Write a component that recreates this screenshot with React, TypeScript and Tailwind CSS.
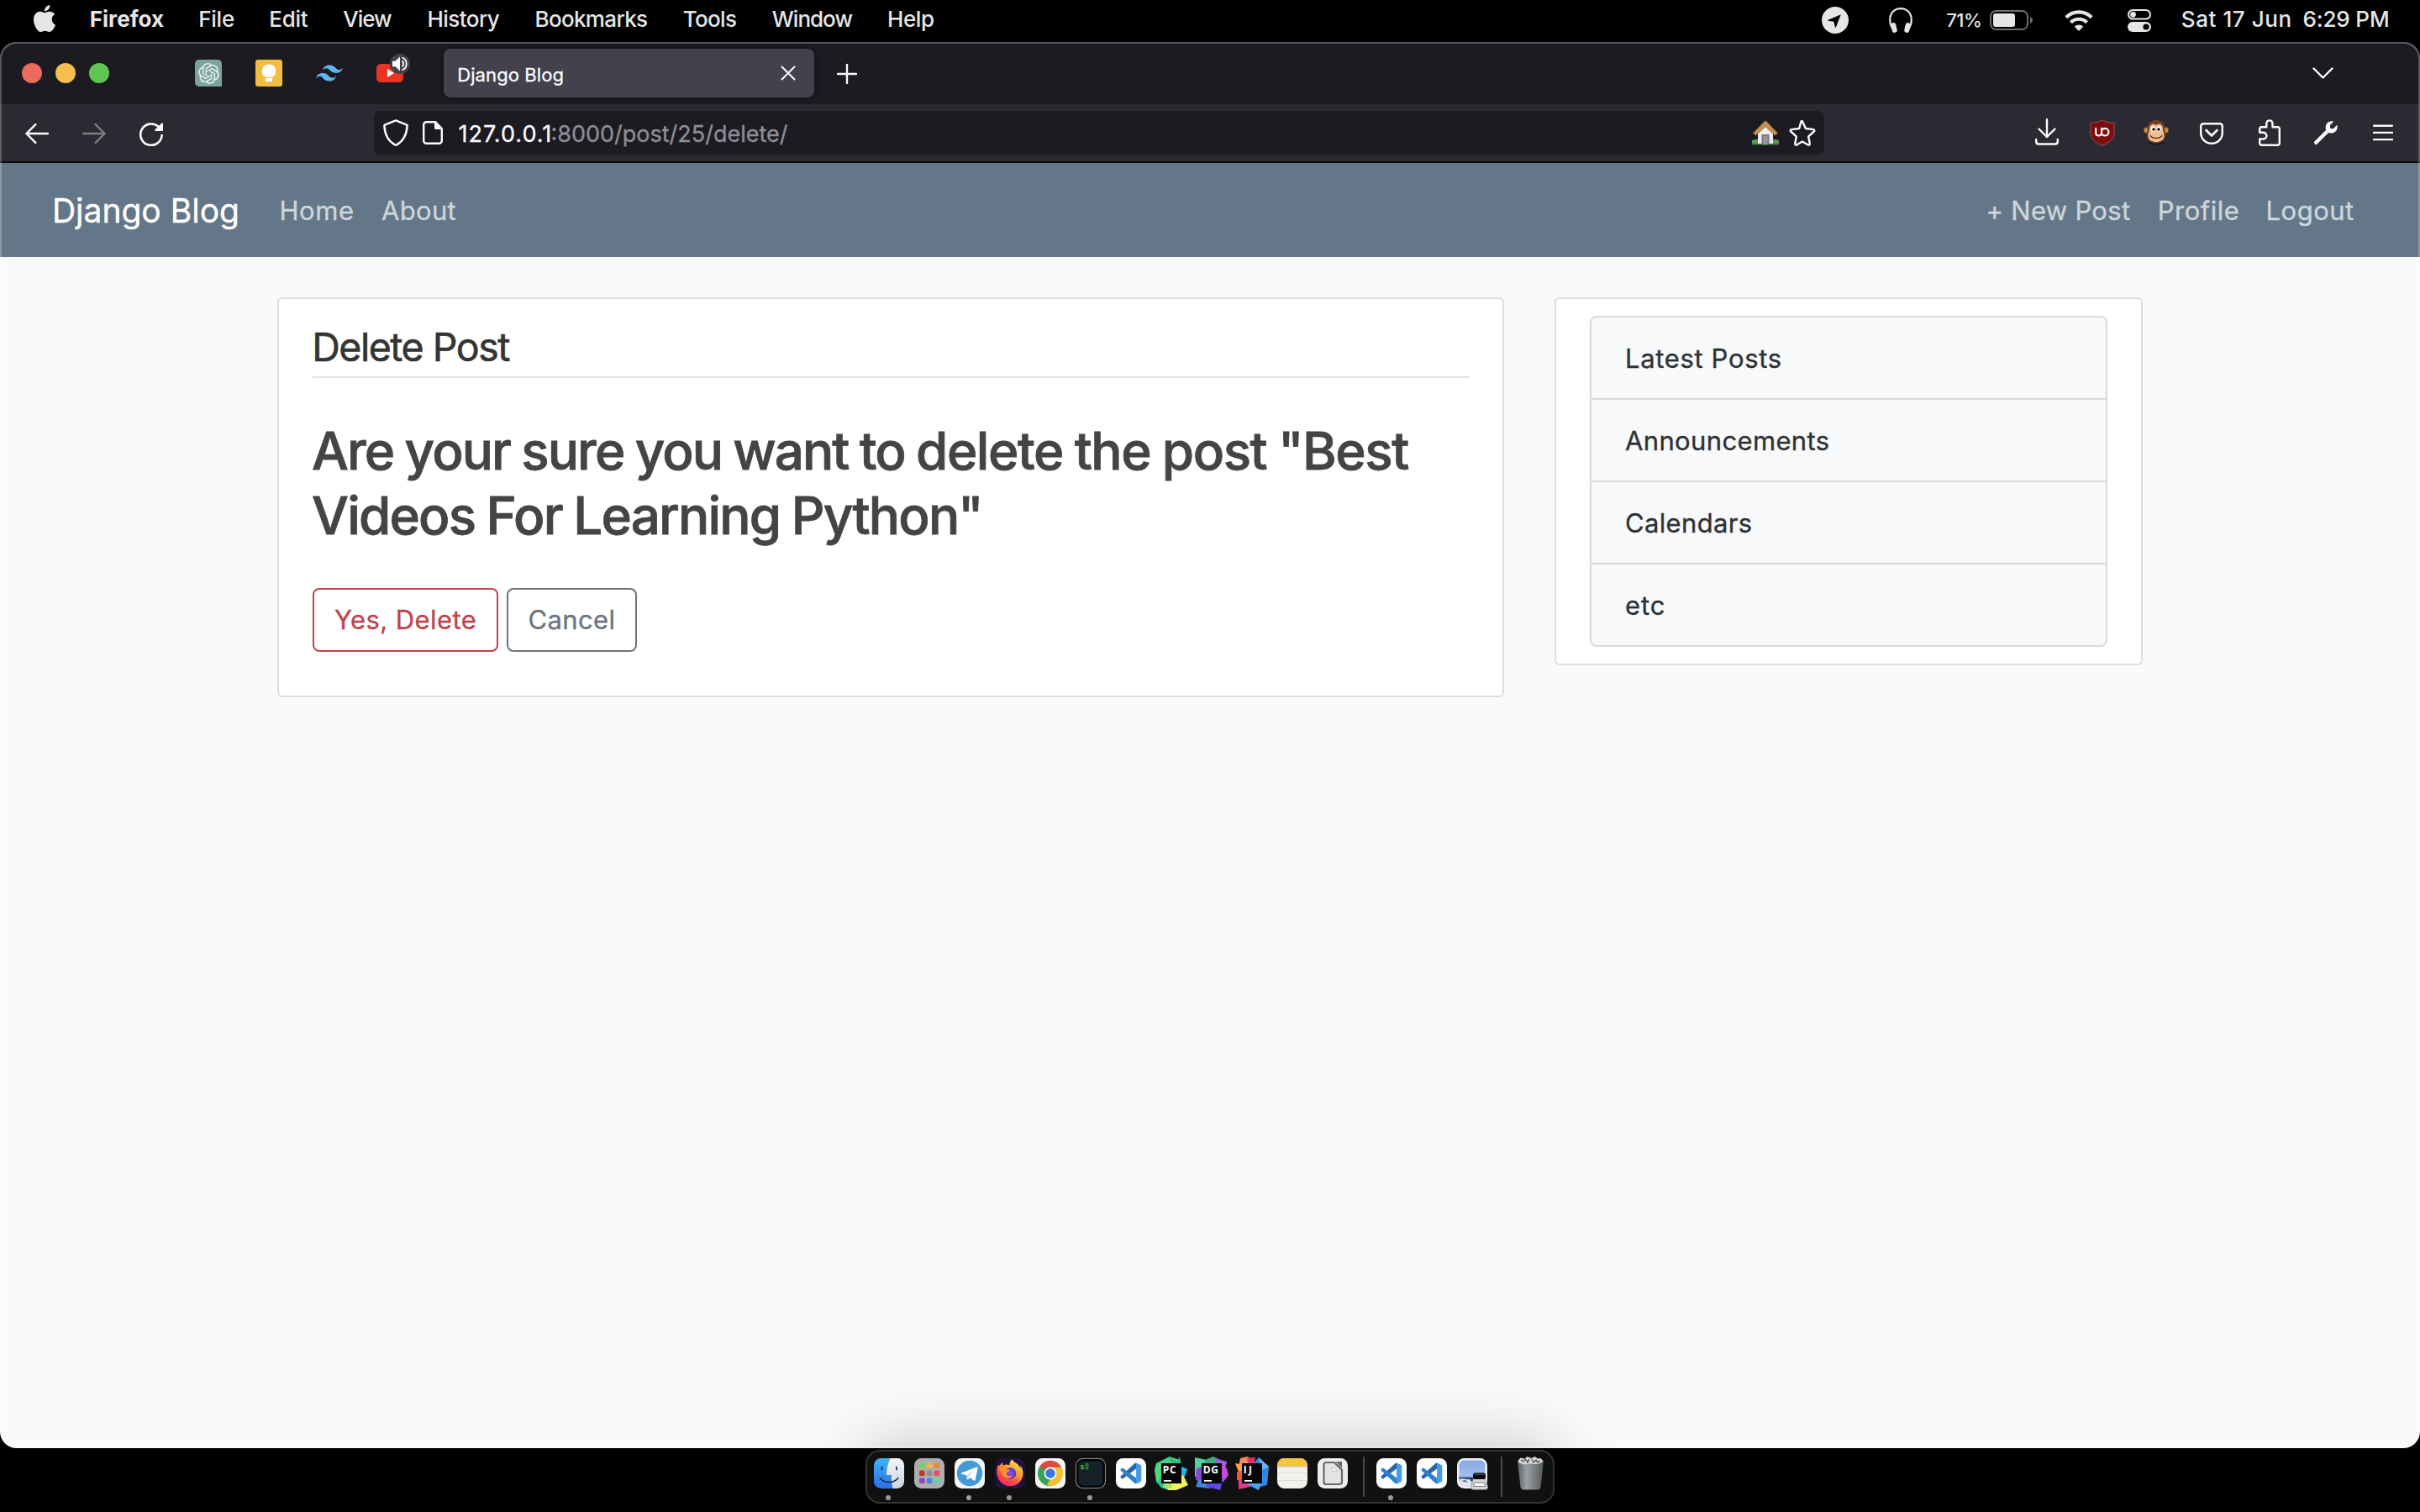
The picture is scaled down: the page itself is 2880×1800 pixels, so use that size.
import React from 'react';
import type { ReactNode } from 'react';
import { SiApple, SiOpenai, SiTailwindcss } from 'react-icons/si';

type Item = { label: string; cls: string };

const menus: Item[] = [
  { label: 'Firefox', cls: 'w-[129.5px] font-bold tracking-[0.06px]' },
  { label: 'File', cls: 'w-[84.1px] tracking-[-0.24px]' },
  { label: 'Edit', cls: 'w-[88px] tracking-[-0.3px]' },
  { label: 'View', cls: 'w-[100.2px] tracking-[-1px]' },
  { label: 'History', cls: 'w-[128px] tracking-[-0.56px]' },
  { label: 'Bookmarks', cls: 'w-[176.3px] tracking-[-0.66px]' },
  { label: 'Tools', cls: 'w-[106px] tracking-[-0.68px]' },
  { label: 'Window', cls: 'w-[137.2px] tracking-[-1px]' },
  { label: 'Help', cls: 'w-[60px] tracking-[-0.39px]' },
];

const topics: Item[] = [
  { label: 'Latest Posts', cls: 'tracking-[0.65px]' },
  { label: 'Announcements', cls: 'tracking-[0.36px]' },
  { label: 'Calendars', cls: 'tracking-[0.35px]' },
  { label: 'etc', cls: 'tracking-[0.9px]' },
];

function MenuBar() {
  return (
    <header className="flex h-[50px] shrink-0 items-start bg-black text-[26px] font-medium text-[#e6e6e6]">
      <SiApple className="mt-[6px] ml-[37px] h-[32px] w-[32px] shrink-0" />
      <nav className="ml-[37.7px] flex h-[45px] items-center whitespace-nowrap">
        {menus.map((m) => (
          <span key={m.label} className={`shrink-0 ${m.cls}`}>{m.label}</span>
        ))}
      </nav>
      <div className="ml-auto flex h-[48px] w-[712px] items-center">
        <svg className="h-8 w-8 shrink-0" viewBox="0 0 32 32">
          <circle cx="16" cy="16" r="16" fill="#e6e6e6" />
          <path d="M22.8 9.2 7.6 15.8c-.6.3-.5.9.1 1l6.6 1 1.6 6.4c.2.6.8.7 1.1.1z" fill="#000" />
        </svg>
        <svg className="ml-12 h-[30px] w-7 shrink-0" viewBox="0 0 28 30">
          <path d="M3.6 24C1.9 21 1.2 18 1.2 14.500 1.200 6.500 6.800 1.200 14 1.200s12.800 5.300 12.800 13.300c0 3.500-.7 6.500-2.400 9.500" fill="none" stroke="#e6e6e6" strokeWidth="2.2" />
          <rect x="3" y="18" width="6" height="12" rx="3" transform="rotate(-14 6 24)" fill="#e6e6e6" />
          <rect x="19" y="18" width="6" height="12" rx="3" transform="rotate(14 22 24)" fill="#e6e6e6" />
        </svg>
        <span className="ml-[40.2px] w-[51.8px] shrink-0 text-[22px] tracking-[-0.4px]">71%</span>
        <svg className="h-6 w-[52px] shrink-0" viewBox="0 0 52 24">
          <rect x="1" y="1" width="44" height="22" rx="6.500" fill="none" stroke="#6e6e6e" strokeWidth="2" />
          <rect x="4" y="4" width="26" height="16" rx="3" fill="#e6e6e6" />
          <path d="M48 8c4 1.500 4 6.500 0 8z" fill="#6e6e6e" />
        </svg>
        <svg className="ml-[37px] h-[25px] w-[34px] shrink-0" viewBox="0 0 34 25">
          <path d="M1.800 8.800C10 .2 24 .2 32.200 8.800" fill="none" stroke="#e6e6e6" strokeWidth="4.200" />
          <path d="M7.500 14.700c5-5.300 14-5.300 19 0" fill="none" stroke="#e6e6e6" strokeWidth="4.200" />
          <path d="M17 25l-5.200-5.300c2.800-3 7.600-3 10.400 0z" fill="#e6e6e6" />
        </svg>
        <svg className="ml-[41px] h-[27px] w-7 shrink-0" viewBox="0 0 28 27">
          <rect x="1" y="1" width="26" height="10.600" rx="5.300" fill="none" stroke="#e6e6e6" strokeWidth="2" />
          <circle cx="6.500" cy="6.300" r="3.400" fill="#e6e6e6" />
          <rect y="15" width="28" height="12" rx="6" fill="#e6e6e6" />
          <circle cx="22" cy="21" r="3.600" fill="#000" />
        </svg>
        <div className="-mt-[3px] ml-[35.8px] flex whitespace-nowrap">
          <span className="w-[144.600px] tracking-[0.57px]">Sat 17 Jun</span>
          <span className="tracking-[-0.12px]">6:29 PM</span>
        </div>
      </div>
    </header>
  );
}

function TabStrip() {
  return (
    <div className="flex h-[74px] shrink-0 items-center bg-[#1c1b22] text-[#fbfbfe]">
      <div className="ml-[26px] flex gap-4">
        <span className="h-6 w-6 rounded-full bg-[#ec6a5e]" />
        <span className="h-6 w-6 rounded-full bg-[#f4bf4f]" />
        <span className="h-6 w-6 rounded-full bg-[#61c554]" />
      </div>
      <div className="ml-[102px] flex gap-10">
        <span className="flex h-8 w-8 items-center justify-center rounded-[5px] rounded-br-none bg-[#7ba59a]">
          <SiOpenai className="h-[25px] w-[25px] text-[#e4efec]" />
        </span>
        <svg className="h-8 w-8" viewBox="0 0 32 32">
          <rect width="32" height="32" rx="3" fill="#f1bd42" />
          <path d="M16 5.500a8.300 8.300 0 0 0-4.500 15.200h9A8.300 8.300 0 0 0 16 5.500z" fill="#fff" />
          <rect x="12" y="22" width="8" height="4" fill="#fff" />
        </svg>
        <SiTailwindcss className="h-8 w-8 text-[#5fb5f0]" />
        <span className="relative flex h-8 w-8 items-center">
          <svg className="h-[22px] w-8" viewBox="0 0 32 22">
            <rect width="32" height="22" rx="5.500" fill="#e93323" />
            <path d="M13 6v10l8-5z" fill="#fff" />
          </svg>
          <svg className="absolute -top-[7px] left-4 h-6 w-6" viewBox="0 0 24 24">
            <circle cx="12" cy="12" r="12" fill="#42414d" />
            <path d="M3 8.800h3.500L12 3.500v17l-5.500-5.300H3z" fill="#fff" />
            <path d="M14.500 8.500a4.500 4.500 0 0 1 0 7M14.500 4.500a8 8 0 0 1 0 15" fill="none" stroke="#fff" strokeWidth="1.800" />
          </svg>
        </span>
      </div>
      <div className="ml-12 flex h-[58px] w-[441px] items-center rounded-lg bg-[#42414d] shadow-[0_0_6px_rgba(0,0,0,0.5)]">
        <span className="mt-[4px] ml-[16.2px] text-[22px] whitespace-nowrap tracking-[0.100px] [-webkit-text-stroke:0.3px]">Django Blog</span>
        <svg className="mr-[22px] ml-auto h-[18px] w-[18px]" viewBox="0 0 18 18">
          <path d="M1.500 1.500l15 15M16.500 1.500l-15 15" stroke="#fbfbfe" strokeWidth="2" strokeLinecap="round" />
        </svg>
      </div>
      <svg className="mt-[2px] ml-[27px] h-6 w-6" viewBox="0 0 24 24">
        <path d="M12 1v22M1 12h22" stroke="#fbfbfe" strokeWidth="2.400" strokeLinecap="round" />
      </svg>
      <svg className="mr-[103px] ml-auto h-[14px] w-[25px]" viewBox="0 0 25 14">
        <path d="M1.500 1.500l11 11 11-11" fill="none" stroke="#fbfbfe" strokeWidth="2.400" strokeLinecap="round" strokeLinejoin="round" />
      </svg>
    </div>
  );
}

function House() {
  return (
    <svg className="h-8 w-8 shrink-0" viewBox="0 0 32 32">
      <path d="M0 25c5-2 27-2 32 0v6H0z" fill="#5b9a50" />
      <path d="M0 29h32v2H0z" fill="#2f5d2b" />
      <path d="M7 15l9-9 9 9v14H7z" fill="#ececec" />
      <rect x="11.500" y="18" width="9" height="12" fill="#77797c" />
      <rect x="13.500" y="20" width="5" height="10" fill="#96989b" />
      <path d="M1.500 16.500L15 2.500c.6-.6 1.400-.6 2 0l13.500 14-3 2.500L16 8.500 4.500 19z" fill="#c59254" stroke="#96683a" strokeWidth="1" />
    </svg>
  );
}

function Monkey() {
  return (
    <svg className="ml-[34px] h-8 w-[30px] shrink-0" viewBox="0 0 30 32">
      <ellipse cx="15" cy="28" rx="10" ry="2.500" fill="#1b1a20" />
      <circle cx="3.600" cy="13" r="3.500" fill="#c98d58" stroke="#6e4220" />
      <circle cx="26.400" cy="13" r="3.500" fill="#c98d58" stroke="#6e4220" />
      <path d="M15 1C8 1 4 6 4.500 13c0 4-1 5-.5 8 1 5 6 7.500 11 7.500S25 26 26 21c.5-3-.5-4-.5-8C26 6 22 1 15 1z" fill="#6e4220" />
      <path d="M15 7.500c-2-3-8-2-8 4 0 4-1.800 5-1.500 8.500C6 25 10.500 27 15 27s9-2 9.500-7c.3-3.500-1.500-4.500-1.500-8.500 0-6-6-7-8-4z" fill="#efbf90" />
      <ellipse cx="11.500" cy="11.500" rx="2.600" ry="3.200" fill="#fff" />
      <ellipse cx="18.500" cy="11.500" rx="2.600" ry="3.200" fill="#fff" />
      <circle cx="12" cy="12" r="1.800" fill="#111" />
      <circle cx="18" cy="12" r="1.800" fill="#111" />
      <path d="M8 19.500c3 4 11 4 14 0" fill="none" stroke="#6e4220" strokeWidth="1.300" strokeLinecap="round" />
    </svg>
  );
}

function Toolbar() {
  return (
    <div className="flex h-[70px] shrink-0 items-center border-b-2 border-[#0c0c0d] bg-[#2b2a33] text-[#fbfbfe]">
      <svg className="mt-[1px] ml-[30px] h-6 w-7 shrink-0" viewBox="0 0 28 24">
        <path d="M27 12H1.500M12.300 1.200L1.500 12l10.800 10.800" fill="none" stroke="#fbfbfe" strokeWidth="2.400" strokeLinecap="round" strokeLinejoin="round" />
      </svg>
      <svg className="mt-[1px] ml-10 h-6 w-7 shrink-0" viewBox="0 0 28 24">
        <path d="M1 12h25.500M15.700 1.200L26.500 12 15.700 22.800" fill="none" stroke="#7d7c83" strokeWidth="2.400" strokeLinecap="round" strokeLinejoin="round" />
      </svg>
      <svg className="mt-[3px] ml-10 h-7 w-7 shrink-0" viewBox="0 0 28 28">
        <path d="M26.600 15A12.700 12.700 0 1 1 22.500 4.800" fill="none" stroke="#fbfbfe" strokeWidth="2.600" strokeLinecap="round" />
        <path d="M28 1v8.200c0 .5-.4.800-.8.800H19c-.8 0-1.100-.9-.6-1.400L26.600.4c.5-.5 1.400-.2 1.400.6z" fill="#fbfbfe" />
      </svg>
      <div className="ml-[251px] flex h-[52px] w-[1726px] shrink-0 items-center rounded-lg bg-[#1c1b22]">
        <svg className="ml-[11px] h-8 w-[30px] shrink-0" viewBox="0 0 30 32">
          <path d="M15 1.400L28 6.600c.5.200.7.600.6 1.100-.6 10.300-4.600 18.300-12.600 22.600-.7.400-1.300.4-2 0C6 26 2 18 1.400 7.700c0-.5.200-.9.600-1.100z" fill="none" stroke="#fbfbfe" strokeWidth="2.500" strokeLinejoin="round" />
        </svg>
        <svg className="ml-[17px] h-7 w-6 shrink-0" viewBox="0 0 24 28">
          <path d="M15 1.200H4.500a3.300 3.300 0 0 0-3.300 3.300v19a3.300 3.300 0 0 0 3.300 3.300h15a3.300 3.300 0 0 0 3.300-3.300V9z" fill="none" stroke="#fbfbfe" strokeWidth="2.400" strokeLinejoin="round" />
          <path d="M14 1v7.500c0 .9.600 1.500 1.500 1.500H23z" fill="#fbfbfe" />
        </svg>
        <span className="mt-[5px] ml-[18.500px] w-[110px] shrink-0 text-[27px] tracking-[1px] [-webkit-text-stroke:0.3px]">127.0.0.1</span>
        <span className="mt-[5px] text-[27px] whitespace-nowrap text-[#8f8e95] [-webkit-text-stroke:0.3px]">:8000/post/25/delete/</span>
        <div className="mr-[10px] ml-auto flex items-center gap-3">
          <House />
          <svg className="h-8 w-8 shrink-0" viewBox="0 0 32 32">
            <path d="M16 2.600l3.700 7.900c.1.300.4.500.7.500l8.600 1.100c1.300.2 1.700 1.500.8 2.400l-6.200 5.700c-.3.300-.4.600-.3 1l1.500 7.800c.2 1.200-1 2-2 1.500l-6.300-3.700a1 1 0 0 0-1 0l-6.300 3.700c-1 .5-2.200-.3-2-1.500l1.500-7.800c.1-.4 0-.7-.3-1l-6.200-5.700c-.9-.9-.5-2.200.8-2.400l8.600-1.100c.3 0 .6-.2.700-.5L14.500 2.700c.3-.9 1.200-.9 1.500-.1z" fill="none" stroke="#fbfbfe" strokeWidth="2.400" strokeLinejoin="round" />
          </svg>
        </div>
      </div>
      <svg className="-mt-[2px] ml-[250.500px] h-8 w-7 shrink-0" viewBox="0 0 28 32">
        <path d="M14 1.200V22M4.500 12.500L14 22l9.500-9.500M1.200 25v2.500c0 1.800 1.200 3 3 3h19.600c1.800 0 3-1.200 3-3V25" fill="none" stroke="#fbfbfe" strokeWidth="2.400" strokeLinecap="round" strokeLinejoin="round" />
      </svg>
      <svg className="ml-[37px] h-8 w-[30px] shrink-0" viewBox="0 0 30 32">
        <path d="M15 .8C19 3.200 24 4.200 29.200 4.500v12c0 6.500-6 11.500-14.200 14.900C6.800 28 .8 23 .8 16.500v-12C6 4.200 11 3.200 15 .8z" fill="#7a0f10" stroke="#a0605f" strokeWidth=".8" />
        <path d="M7.200 10.800v5.400c0 2 1.400 3.300 3.500 3.300s3.400-1.300 3.400-3.300v-5.400" fill="none" stroke="#fff" strokeWidth="2.100" strokeLinecap="round" />
        <circle cx="18.200" cy="15.200" r="4.300" fill="none" stroke="#fff" strokeWidth="2.100" />
      </svg>
      <Monkey />
      <svg className="mt-[1px] ml-[37px] h-[26px] w-7 shrink-0" viewBox="0 0 28 26">
        <path d="M4.500 1.200h19c1.900 0 3.300 1.400 3.300 3.300V12c0 7.200-5.600 12.800-12.800 12.800S1.200 19.200 1.200 12V4.500c0-1.900 1.400-3.300 3.300-3.300z" fill="none" stroke="#fbfbfe" strokeWidth="2.400" />
        <path d="M7.500 9l6.500 6.500L20.500 9" fill="none" stroke="#fbfbfe" strokeWidth="2.600" strokeLinecap="round" strokeLinejoin="round" />
      </svg>
      <svg className="ml-[42px] h-8 w-[26px] shrink-0" viewBox="0 0 26 32">
        <path d="M9.300 9.200V5a3.600 3.600 0 0 1 7.200 0v4.200h5.800c1.400 0 2.500 1.100 2.500 2.500v16.600c0 1.400-1.100 2.500-2.500 2.500H3.700a2.500 2.500 0 0 1-2.500-2.500v-4.800h4.300a3.900 3.900 0 0 0 0-7.800H1.200v-4c0-1.400 1.100-2.500 2.500-2.500z" fill="none" stroke="#fbfbfe" strokeWidth="2.400" strokeLinejoin="round" />
      </svg>
      <svg className="ml-10 h-7 w-7 shrink-0" viewBox="0 0 28 28">
        <path d="M2.200 25.800L17 11" stroke="#fbfbfe" strokeWidth="4.400" strokeLinecap="round" />
        <path d="M23.200.8l-4.400 4.400.4 3.600 3.600.4L27.300 4.700c.8 2.600.4 5.500-1.600 7.500-2.600 2.600-6.400 3-9.300 1.200-2.900-2.400-3.800-6.600-1.400-10.100C16.800.6 20.300-.3 23.200.8z" fill="#fbfbfe" />
      </svg>
      <svg className="ml-[42px] h-5 w-6 shrink-0" viewBox="0 0 24 20">
        <path d="M1 1.700h22M1 9.900h22M1 18.100h22" stroke="#fbfbfe" strokeWidth="2.400" strokeLinecap="round" />
      </svg>
    </div>
  );
}

function SiteNav() {
  return (
    <nav className="flex h-[112px] shrink-0 items-center bg-[#647788] pt-[3px] text-[31px] whitespace-nowrap text-[#ccd6dc] [-webkit-text-stroke:0.35px]">
      <span className="ml-[61.900px] w-[270.500px] text-[39px] text-white">Django Blog</span>
      <span className="w-[121.500px] tracking-[0.600px]">Home</span>
      <span className="tracking-[0.350px]">About</span>
      <div className="ml-auto flex">
        <span className="w-[204.400px] tracking-[0.300px]">+ New Post</span>
        <span className="w-[128.800px] tracking-[0.500px]">Profile</span>
        <span className="w-[183.400px] tracking-[0.480px]">Logout</span>
      </div>
    </nav>
  );
}

function PageBody() {
  return (
    <main className="mx-auto flex w-[2220px] items-start gap-[60px] pt-12">
      <section className="h-[476px] w-[1460px] shrink-0 rounded-[6px] border-2 border-[#dddddd] bg-white px-10">
        <h2 className="border-b-2 border-[#e0e3e3] pt-[34px] pb-3 text-[46.500px] leading-[46px] tracking-[-1.500px] text-[#343434] [-webkit-text-stroke:0.6px]">
          <span className="-ml-[0.700px]">Delete Post</span>
        </h2>
        <h1 className="mt-[49px] -ml-[1px] text-[62px] leading-[76.800px] font-medium whitespace-nowrap text-[#444444] [-webkit-text-stroke:0.8px]">
          <span className="block tracking-[-1.950px] [word-spacing:-1.300px]">
            Are your sure you want to <span className="tracking-[-1.480px]">delete the post "Best</span>
          </span>
          <span className="block tracking-[-1.800px] [word-spacing:-1.500px]">Videos For Learning Python"</span>
        </h1>
        <div className="mt-[47px] flex gap-[9.500px] text-[31px] whitespace-nowrap [-webkit-text-stroke:0.35px]">
          <button className="h-[76px] w-[221px] rounded-lg border-2 border-[#bf434c] pt-[2px] pl-[24px] text-left tracking-[0.410px] text-[#bf434c]">Yes, Delete</button>
          <button className="h-[76px] w-[155.500px] rounded-lg border-2 border-[#6c757d] pt-[2px] pl-[24px] text-left tracking-[0.350px] text-[#6c757d]">Cancel</button>
        </div>
      </section>
      <aside className="h-[438px] w-[700px] shrink-0 rounded-[6px] border-2 border-[#dddddd] bg-white px-10 pt-5">
        <ul className="divide-y-2 divide-[#d9dadb] overflow-hidden rounded-lg border-2 border-[#d9dadb] bg-[#f8f9fb] text-[31px] text-[#2f3133] [-webkit-text-stroke:0.35px]">
          {topics.map((t) => (
            <li key={t.label} className={`flex items-center pt-[2px] pl-10 leading-[94px] ${t.cls}`}>{t.label}</li>
          ))}
        </ul>
      </aside>
    </main>
  );
}

function DockCell({ children, running }: { children: ReactNode; running?: boolean }) {
  return (
    <div className="relative flex h-full w-12 shrink-0 justify-center pt-[6px]">
      <span className="h-10 w-10">{children}</span>
      {running && <span className="absolute bottom-[2px] left-5 h-[6px] w-[6px] rounded-full bg-[#9a9a9a]" />}
    </div>
  );
}

function Finder() {
  return (
    <svg viewBox="0 0 40 40">
      <defs>
        <linearGradient id="fb" x1="0" y1="0" x2="0" y2="1"><stop stopColor="#3fb4f5" /><stop offset="1" stopColor="#2b6fe8" /></linearGradient>
        <linearGradient id="fw" x1="0" y1="0" x2="0" y2="1"><stop stopColor="#f3f5f8" /><stop offset="1" stopColor="#cdd5e0" /></linearGradient>
        <clipPath id="fc"><rect x="2" y="2" width="36" height="36" rx="8.500" /></clipPath>
      </defs>
      <g clipPath="url(#fc)">
        <rect x="2" y="2" width="36" height="36" fill="url(#fb)" />
        <path d="M21.500 2c-3 6-4.500 13-4.500 20h6c-.3 5.500.2 11 1.500 16H38V2z" fill="url(#fw)" />
      </g>
      <path d="M11.500 12.500v3M29 12.500v3" stroke="#1f2a3a" strokeWidth="1.700" strokeLinecap="round" />
      <path d="M9 25.500c5.500 6.800 16.500 6.800 22 0" fill="none" stroke="#1f2a3a" strokeWidth="1.500" strokeLinecap="round" />
    </svg>
  );
}

const padColors = ['#67d75b', '#f2b73f', '#e88a2e', '#c8312a', '#8e8e90', '#e64c62', '#9440c4', '#3f86f0', '#63cfa4'];

function Launchpad() {
  return (
    <svg viewBox="0 0 40 40">
      <rect x="2" y="2" width="36" height="36" rx="8.500" fill="#adadb0" />
      {padColors.map((c, i) => (
        <rect key={c} x={8 + (i % 3) * 8.8} y={7.600 + Math.floor(i / 3) * 9} width="6.600" height="6.400" rx="1.800" fill={c} />
      ))}
    </svg>
  );
}

function Telegram() {
  return (
    <svg viewBox="0 0 40 40">
      <rect x="2" y="2" width="36" height="36" rx="8.500" fill="#f4f5f6" />
      <circle cx="20" cy="20" r="15.200" fill="#439ad6" />
      <path d="M10 19.600l18.200-7.200c1-.3 1.600.2 1.400 1.300l-3 14c-.2 1-.9 1.200-1.800.7l-4.600-3.400-2.300 2.200c-.6.500-1 .3-1.100-.4l-.6-4.400-6-1.900c-.9-.2-.9-.6-.2-.9z" fill="#fff" />
      <path d="M16.300 22.500l9.800-7.500-7.600 8.600-.8 3.400z" fill="#b8d6ec" />
    </svg>
  );
}

function FirefoxIcon() {
  return (
    <svg viewBox="0 0 40 40">
      <defs>
        <linearGradient id="ff" x1=".85" y1=".05" x2=".3" y2="1"><stop stopColor="#ffe24a" /><stop offset=".4" stopColor="#ffa02d" /><stop offset=".72" stopColor="#fb4c3f" /><stop offset="1" stopColor="#e0266e" /></linearGradient>
        <radialGradient id="fp"><stop stopColor="#9a4dea" /><stop offset="1" stopColor="#4f35b8" /></radialGradient>
      </defs>
      <rect x="2" y="2" width="36" height="36" rx="8.500" fill="#21123f" />
      <path d="M22.500 3.200c-2.300 2-3.200 4.600-3 7-2.200-1-5.500-1-7.500.3-.8-.6-1.200-2-1-3.300-1.800 1-2.600 2.500-3 3.800L6.200 9.800C4 14 3.800 18 4.800 22.500 6.400 30 12.500 35.300 20 35.300c8.700 0 15.200-6.300 15.500-15 .1-4.300-1.500-7.500-3.300-9.300l.3 3c-1.200-3.200-3-5-5.500-6.300-2-1.200-3.500-2.500-4.500-4.500z" fill="url(#ff)" />
      <circle cx="20.500" cy="20" r="6.800" fill="url(#fp)" />
      <path d="M8 14.500c3.500-1.500 6-.4 7.300.8 2 .2 4.200.2 4.700 1-.5 1.700-3.800 2-4.300 3.700-.3 1.500 1 3 3 3.200 2.200.2 3-.9 4.500-.4-1.700 2.700-5 3.700-7.700 2.400-4.500-2-7-6.200-7.500-10.700z" fill="#ff9330" />
    </svg>
  );
}

function Chrome() {
  return (
    <svg viewBox="0 0 40 40">
      <rect x="2" y="2" width="36" height="36" rx="8.500" fill="#f5f5f5" />
      <path d="M20 20L6.840 12.400A15.200 15.200 0 0 1 33.160 12.400z" fill="#db4b3c" />
      <path d="M20 20L33.160 12.400A15.200 15.200 0 0 1 20 35.200z" fill="#f6bf36" />
      <path d="M20 20L20 35.200A15.200 15.200 0 0 1 6.840 12.400z" fill="#3aa356" />
      <path d="M20 12.800h13.400c.9 2 1.300 4 1.400 5L25 24z" fill="#f6bf36" />
      <path d="M26.300 23.500L20 35.200l-4-2 6-9z" fill="#f6bf36" />
      <path d="M6.840 12.400L14 24l5-3-4-6z" fill="#3aa356" />
      <circle cx="20" cy="20" r="7.400" fill="#fff" />
      <circle cx="20" cy="20" r="5.800" fill="#3b78e0" />
    </svg>
  );
}

function Terminal() {
  return (
    <svg viewBox="0 0 40 40">
      <rect x="2" y="2" width="36" height="36" rx="8.500" fill="#8d9093" />
      <rect x="3" y="3" width="34" height="34" rx="7.600" fill="#050607" />
      <rect x="5.500" y="5.500" width="29" height="29" rx="5" fill="#16212a" />
      <text x="7.500" y="14.500" fontSize="8" fontWeight="700" fontFamily="Liberation Mono, monospace" fill="#49c13c">$</text>
      <rect x="13.500" y="7.500" width="4" height="8" fill="#2c6a2d" />
    </svg>
  );
}

function Code() {
  return (
    <svg viewBox="0 0 40 40">
      <rect x="2" y="2" width="36" height="36" rx="8.500" fill="#fdfdfd" />
      <g transform="translate(7.500 7.600) scale(.248)">
        <path d="M96.460 10.800 75.860.88a6.230 6.230 0 0 0-7.100 1.200L1.300 63.600a4.170 4.170 0 0 0 0 6.160l5.510 5a4.170 4.170 0 0 0 5.320.24L93.360 13.400a4.130 4.130 0 0 1 6.640 3.300z" fill="#2566ab" />
        <path d="M96.460 89.200l-20.600 9.920a6.230 6.230 0 0 1-7.100-1.200L1.300 36.400a4.170 4.170 0 0 1 0-6.160l5.510-5a4.170 4.170 0 0 1 5.320-.24L93.360 86.600A4.130 4.130 0 0 0 100 83.300z" fill="#2f7fcb" />
        <path d="M75.860 99.130a6.230 6.230 0 0 1-7.100-1.210A3.660 3.660 0 0 0 75 95.330V4.670a3.660 3.660 0 0 0-6.240-2.590 6.230 6.230 0 0 1 7.100-1.210l20.600 9.900A6.250 6.250 0 0 1 100 16.410v67.180a6.250 6.250 0 0 1-3.540 5.630z" fill="#449ce8" />
      </g>
    </svg>
  );
}

function JetBrains({ name, shards }: { name: string; shards: [string, string][] }) {
  return (
    <svg viewBox="0 0 40 40">
      {shards.map(([points, fill]) => (
        <polygon key={points} points={points} fill={fill} />
      ))}
      <rect x="8" y="8" width="24" height="24" fill="#050505" />
      <text x="9.800" y="20" fontSize="12" fontWeight="700" letterSpacing={name === 'IJ' ? 2.2 : 0.6} fontFamily="Open Sans, sans-serif" fill="#fff">{name}</text>
      <rect x="11" y="28" width="9" height="1.800" fill="#fff" />
    </svg>
  );
}

const pycharm: [string, string][] = [
  ['2,8 18,0 30,4 26,14 8,20', '#3fd08f'],
  ['18,0 27,6 30,0 32,10 20,12', '#2bbf7a'],
  ['0,16 2,8 12,10 10,34 2,30', '#4fd67c'],
  ['2,30 12,20 16,40 8,37', '#2fc48a'],
  ['30,11 39,15 36,24 30,24', '#26b5e6'],
  ['12,30 34,22 40,34 26,40 16,40', '#f0f25a'],
  ['12,30 22,30 20,38 10,37', '#a6e663'],
];
const datagrip: [string, string][] = [
  ['0,1 14,4 12,24 0,24', '#4fd39a'],
  ['12,4 22,0 38,8 34,14 10,12', '#3fae7d'],
  ['24,2 38,6 36,14 28,14', '#9a5be8'],
  ['32,8 38,14 40,22 34,30 30,30', '#c84be0'],
  ['2,14 10,12 10,30 1,28', '#8a44d8'],
  ['4,28 16,26 18,38 1,36', '#3f8bd8'],
  ['12,30 34,26 30,40 14,36', '#5a4be8'],
];
const intellij: [string, string][] = [
  ['6,2 14,0 22,4 16,14 4,12', '#f58a5a'],
  ['14,2 24,1 22,12 16,12', '#ec2f6b'],
  ['0,8 10,10 10,20 4,18', '#f9a53c'],
  ['2,18 12,16 10,30 2,28', '#f7572f'],
  ['4,28 12,24 18,36 4,39', '#e8358a'],
  ['22,8 28,1 40,12 38,34 30,36', '#2f86e8'],
  ['14,30 34,24 28,40 16,34', '#4fa3f2'],
  ['28,1 40,12 32,16', '#6cb4ee'],
];

function Notes() {
  return (
    <svg viewBox="0 0 40 40">
      <rect x="2" y="2" width="36" height="36" rx="8.500" fill="#f3f1ee" />
      <path d="M2 11.500V10.500A8.500 8.500 0 0 1 10.500 2h19A8.500 8.500 0 0 1 38 10.500v1z" fill="#f4c63f" />
      <path d="M2 11.800h36" stroke="#b5a98a" strokeWidth=".8" />
      <path d="M2 19.500h36M2 28.500h36" stroke="#d9d7d3" strokeWidth=".8" />
    </svg>
  );
}

function LibreOffice() {
  return (
    <svg viewBox="0 0 40 40">
      <rect x="2" y="2" width="36" height="36" rx="8.500" fill="#ededed" />
      <path d="M12 7h10l9 9v14.500a2.500 2.500 0 0 1-2.500 2.500H12a2.500 2.500 0 0 1-2.500-2.500v-21A2.500 2.500 0 0 1 12 7z" fill="#e3e3e3" stroke="#6a6a6a" strokeWidth="2.200" />
      <path d="M19 12v5.500h6.500z" fill="#fafafa" stroke="#b4b4b4" strokeWidth=".7" />
      <path d="M23.500 6H31v8z" fill="#6a6a6a" />
    </svg>
  );
}

function Preview() {
  return (
    <svg viewBox="0 0 40 40">
      <defs><linearGradient id="sky" x1="0" y1="0" x2="0" y2="1"><stop stopColor="#86a9e4" /><stop offset="1" stopColor="#b5cdf2" /></linearGradient></defs>
      <rect x="2" y="2" width="36" height="36" rx="8.500" fill="#eef1f5" />
      <rect x="4.500" y="4.500" width="31" height="31" rx="6" fill="url(#sky)" />
      <path d="M4.500 24.500h31v5h-31z" fill="#2b4a7c" />
      <path d="M4.500 27c5-2 8 1 13 0l3 8.500h-10a6 6 0 0 1-6-6z" fill="#dfe6ee" />
      <path d="M7 29l5-1 3 3z" fill="#4b6187" />
      <path d="M22 25h13l3.500 11c.5 2-1 3.300-3 3.300h-14c-2 0-3.500-1.300-3-3.300z" fill="#d7d9da" stroke="#8b8d8f" strokeWidth=".7" />
      <path d="M22.500 31h12l1.200 4.500H21.500z" fill="#f4f4f4" stroke="#555" strokeWidth=".7" />
      <rect x="21" y="19.500" width="15" height="7.500" rx="2.500" fill="#0d0d0e" />
      <path d="M22.500 21.500h12" stroke="#4d4d4f" strokeWidth="1" />
    </svg>
  );
}

function Trash() {
  return (
    <svg viewBox="0 0 40 40">
      <defs><linearGradient id="can"><stop stopColor="#5b6063" /><stop offset=".35" stopColor="#9ba0a3" /><stop offset=".7" stopColor="#74797c" /><stop offset="1" stopColor="#53585b" /></linearGradient></defs>
      <path d="M4 4.500h31l-3.500 32c-.2 2-2 3-4 3h-16c-2 0-3.800-1-4-3z" fill="url(#can)" />
      <path d="M4.500 5l3-3.500 5 1 3-2.500 5 2 4-2 4 2.500 3-.5 3 3.500-3 2.500-6 1-6-.5-7 1-6-1.500z" fill="#d4d6d7" />
      <path d="M8 4l3 2 2-3 3 4 2-4M21 3l2 4 3-3 2 3 3-2" fill="none" stroke="#4d4c50" strokeWidth="1.200" />
      <path d="M14 4l2 1M26 6l2-1" stroke="#a85a3c" strokeWidth="1.200" />
    </svg>
  );
}

function Dock() {
  return (
    <footer className="flex h-[76px] shrink-0 justify-center bg-black pt-[2px]">
      <div className="flex h-16 w-[820px] rounded-[17px] border-2 border-[#333333] bg-[#111111] px-[2px]">
        <DockCell running><Finder /></DockCell>
        <DockCell><Launchpad /></DockCell>
        <DockCell running><Telegram /></DockCell>
        <DockCell running><FirefoxIcon /></DockCell>
        <DockCell><Chrome /></DockCell>
        <DockCell running><Terminal /></DockCell>
        <DockCell><Code /></DockCell>
        <DockCell><JetBrains name="PC" shards={pycharm} /></DockCell>
        <DockCell><JetBrains name="DG" shards={datagrip} /></DockCell>
        <DockCell><JetBrains name="IJ" shards={intellij} /></DockCell>
        <DockCell><Notes /></DockCell>
        <DockCell><LibreOffice /></DockCell>
        <span className="mt-[6px] mr-[8px] ml-[12px] h-12 w-[2px] bg-[#4a4a4a]" />
        <DockCell running><Code /></DockCell>
        <DockCell><Code /></DockCell>
        <DockCell><Preview /></DockCell>
        <span className="mt-[6px] mr-[10px] ml-[10px] h-12 w-[2px] bg-[#4a4a4a]" />
        <DockCell><Trash /></DockCell>
      </div>
    </footer>
  );
}

export default function App() {
  return (
    <div className="flex h-[1800px] w-[2880px] flex-col overflow-hidden bg-black font-['Inter',sans-serif]">
      <MenuBar />
      <div className="relative flex h-[1674px] shrink-0 flex-col overflow-hidden rounded-[20px] bg-[#fafafa]">
        <TabStrip />
        <Toolbar />
        <SiteNav />
        <PageBody />
        <div className="absolute -bottom-[66px] left-[1030px] h-16 w-[820px] rounded-[17px] shadow-[0_0_80px_rgba(0,0,0,0.26)]" />
        <div className="pointer-events-none absolute inset-0 rounded-[20px] border-2 border-white/25" />
      </div>
      <Dock />
    </div>
  );
}
